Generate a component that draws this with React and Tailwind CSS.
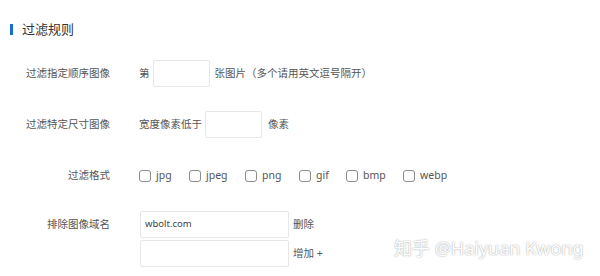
export default function App() {
  const font = { fontFamily: '"Noto Sans", "Noto Sans CJK SC", sans-serif' };
  const formats = [
    ["jpg", "w-[50px]"],
    ["jpeg", "w-[56px]"],
    ["png", "w-[54px]"],
    ["gif", "w-[47px]"],
    ["bmp", "w-[57px]"],
    ["webp", "w-[60px]"],
  ];
  return (
    <div
      className="relative w-[600px] h-[276px] bg-white overflow-hidden text-[#555] text-[10.5px]"
      style={font}
    >
      <div className="flex items-center pt-[20px] pl-[10px] h-[38px]">
        <div className="w-[3px] h-[11px] bg-[#1470cc]" />
        <div className="ml-[9px] text-[13px] text-[#333] leading-[18px]">过滤规则</div>
      </div>

      <div className="flex items-center mt-[22px] h-[27px]">
        <div className="w-[110px] text-right">过滤指定顺序图像</div>
        <div className="ml-[29px] flex items-center">
          <span>第</span>
          <div className="ml-[3px] w-[57px] h-[27px] border border-[#e6e6e6] rounded-[2px]" />
          <span className="ml-[5px]">张图片（多个请用英文逗号隔开）</span>
        </div>
      </div>

      <div className="flex items-center mt-[24px] h-[27px]">
        <div className="w-[110px] text-right">过滤特定尺寸图像</div>
        <div className="ml-[29px] flex items-center">
          <span>宽度像素低于</span>
          <div className="ml-[3px] w-[57px] h-[27px] border border-[#e6e6e6] rounded-[2px]" />
          <span className="ml-[6px]">像素</span>
        </div>
      </div>

      <div className="flex items-center mt-[28px] h-[20px]">
        <div className="w-[110px] text-right">过滤格式</div>
        <div className="ml-[29px] flex items-center">
          {formats.map(([f, w]) => (
            <div key={f} className={`flex items-center ${w}`}>
              <div className="w-[12px] h-[12px] border border-[#8c8c8c] rounded-[3px]" />
              <span className="ml-[5px] text-[10.5px]">{f}</span>
            </div>
          ))}
        </div>
      </div>

      <div className="flex items-start mt-[25px]">
        <div className="w-[110px] text-right leading-[27px]">排除图像域名</div>
        <div className="ml-[30px] flex flex-col gap-[2px]">
          <div className="flex items-center">
            <div className="w-[149px] h-[27px] border border-[#e6e6e6] rounded-[2px] flex items-center pl-[4px] text-[9.5px] text-[#444]">
              wbolt.com
            </div>
            <span className="ml-[4px]">删除</span>
          </div>
          <div className="flex items-center">
            <div className="w-[149px] h-[27px] border border-[#e6e6e6] rounded-[2px]" />
            <span className="ml-[4px]">增加 +</span>
          </div>
        </div>
      </div>

      <div className="absolute left-[394px] top-[235px] whitespace-nowrap text-[18px] leading-[26px] text-white [text-shadow:0_0_1.5px_#8a8a8a]">
        知乎 @Haiyuan Kwong
      </div>
    </div>
  );
}
